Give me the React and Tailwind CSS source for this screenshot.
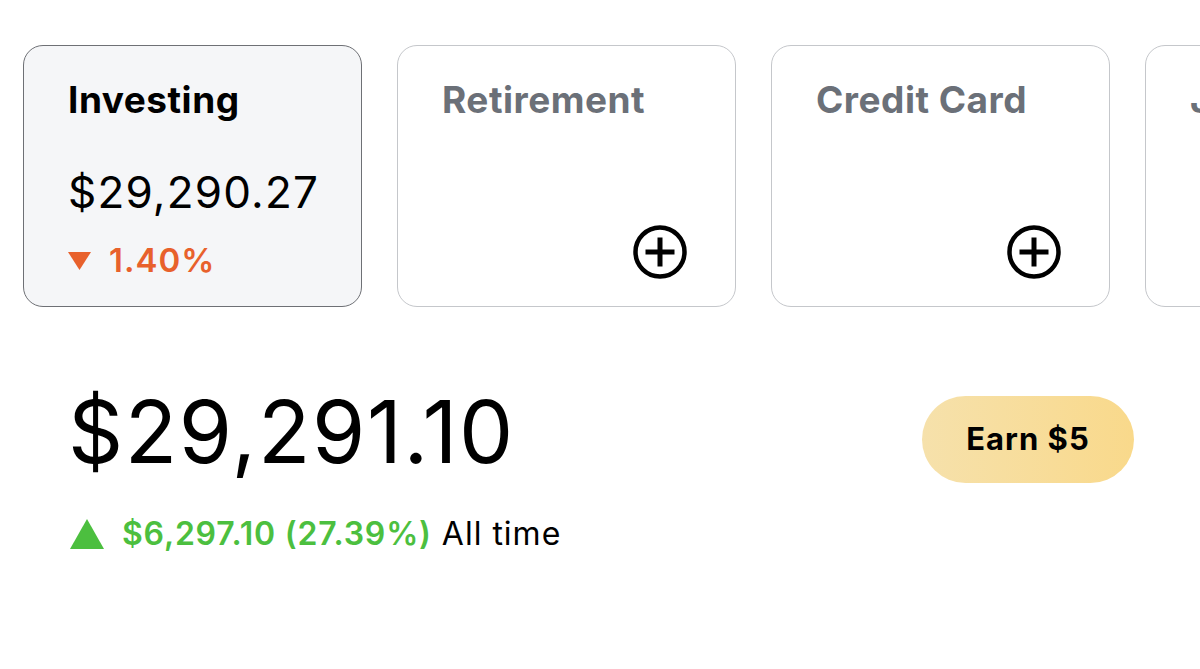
import React from "react";

const PlusCircle = () => (
  <svg width="56" height="56" viewBox="0 0 56 56" fill="none">
    <circle cx="28" cy="28" r="24.5" stroke="#000" strokeWidth="4.5" />
    <path d="M28 13.5v29M13.5 28h29" stroke="#000" strokeWidth="5" />
  </svg>
);

const accounts = [
  { name: "Retirement" },
  { name: "Credit Card" },
  { name: "Joint" },
];

const App = () => {
  return (
    <div
      className="h-[669px] w-[1200px] overflow-hidden bg-white text-black"
      style={{ fontFamily: "Inter, 'Noto Sans', sans-serif" }}
    >
      <div className="flex gap-[35px] pl-[23px] pt-[45px]">
        <div className="h-[262px] w-[339px] shrink-0 rounded-[20px] border border-[#6e7075] bg-[#f5f6f8] pl-[44px] pt-[35px]">
          <div className="text-[37px] font-bold leading-none tracking-[0.5px]">
            Investing
          </div>
          <div className="mt-[52px] text-[44px] leading-none tracking-[1.2px]">
            $29,290.27
          </div>
          <div className="mt-[30px] flex items-center gap-[18px] text-[#e8612c]">
            <svg width="23" height="18" viewBox="0 0 23 18">
              <path d="M0 0h23L11.5 18z" fill="#e8612c" />
            </svg>
            <span className="text-[33px] font-semibold leading-none tracking-[1px]">
              1.40%
            </span>
          </div>
        </div>
        {accounts.map((acc) => (
          <div
            key={acc.name}
            className="relative h-[262px] w-[339px] shrink-0 rounded-[20px] border border-[#c5c7cb] bg-white pl-[44px] pt-[35px]"
          >
            <div className="text-[37px] font-bold leading-none tracking-[0.5px] text-[#6b7078]">
              {acc.name}
            </div>
            <div className="absolute bottom-[26px] right-[47px]">
              <PlusCircle />
            </div>
          </div>
        ))}
      </div>

      <div className="flex items-start justify-between pl-[68px] pr-[66px] pt-[82px]">
        <div>
          <div className="text-[86px] leading-none tracking-[1.6px]">
            $29,291.10
          </div>
          <div className="mt-[43px] flex items-center text-[32px] leading-none">
            <svg width="34" height="30" viewBox="0 0 34 30" className="ml-[2px]">
              <path d="M17 0L34 30H0z" fill="#4cbf3f" />
            </svg>
            <span className="ml-[18px] font-semibold tracking-[0.8px] text-[#4cbf3f]">
              $6,297.10 (27.39%)
            </span>
            <span className="ml-[10px] tracking-[1px]">All time</span>
          </div>
        </div>
        <button className="mt-[7px] flex h-[87px] w-[212px] items-center justify-center rounded-full bg-linear-to-r from-[#f6e1ab] to-[#f9d98b] text-[31px] font-bold tracking-[1px]">
          Earn $5
        </button>
      </div>
    </div>
  );
};

export default App;
